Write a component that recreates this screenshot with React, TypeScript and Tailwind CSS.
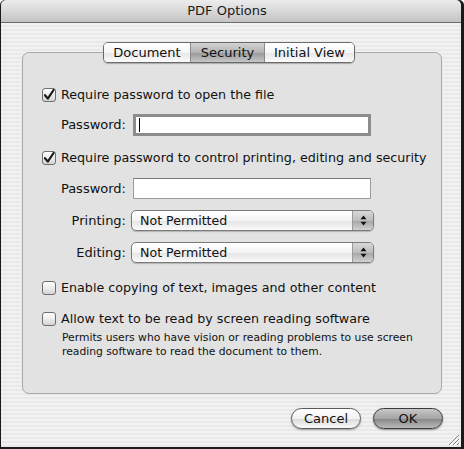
import React from 'react';

const font = "font-['DejaVu_Sans',Verdana,sans-serif]";

const CheckBox = ({ checked }: { checked: boolean }) => (
  <svg width="14" height="14" viewBox="0 0 14 14" className="shrink-0">
    <defs>
      <linearGradient id={checked ? 'cbOn' : 'cbOff'} x1="0" y1="0" x2="0" y2="1">
        <stop offset="0" stopColor="#ffffff" />
        <stop offset="0.5" stopColor="#ececec" />
        <stop offset="1" stopColor="#d2d2d2" />
      </linearGradient>
    </defs>
    <rect x="0.5" y="0.5" width="13" height="13" rx="2.5" fill={`url(#${checked ? 'cbOn' : 'cbOff'})`} stroke="#6e6e6e" />
    {checked && (
      <path d="M3 7.2 L5.8 10.6 L11.6 2" fill="none" stroke="#1a1a1a" strokeWidth="2.2" strokeLinecap="round" strokeLinejoin="round" />
    )}
  </svg>
);

const CheckRow = ({ checked, label }: { checked: boolean; label: string }) => (
  <div className="flex items-center gap-[5px] h-[16px]">
    <CheckBox checked={checked} />
    <span className="text-[12.7px] text-[#111]">{label}</span>
  </div>
);

const Label = ({ children }: { children: React.ReactNode }) => (
  <span className="w-[84px] text-right text-[13px] text-[#111] shrink-0">{children}</span>
);

const PopUp = ({ value }: { value: string }) => (
  <div className="w-[243px] h-[21px] rounded-[5px] border border-[#7a7a7a] flex overflow-hidden bg-[linear-gradient(to_bottom,#ffffff,#f4f4f4_50%,#e6e6e6_55%,#fafafa)] shadow-[0_1px_1px_rgba(0,0,0,0.2)]">
    <span className="flex-1 pl-[8px] text-[12.6px] leading-[19px] text-[#111]">{value}</span>
    <div className="w-[21px] border-l border-[#9a9a9a] flex items-center justify-center bg-[linear-gradient(to_bottom,#d8d8d8,#bdbdbd_50%,#a8a8a8_55%,#d0d0d0)]">
      <svg width="7" height="11" viewBox="0 0 7 11">
        <path d="M3.5 0.5 L6.5 4.2 L0.5 4.2 Z" fill="#111" />
        <path d="M3.5 10.5 L6.5 6.8 L0.5 6.8 Z" fill="#111" />
      </svg>
    </div>
  </div>
);

const tabs = [
  { label: 'Document', w: 'w-[86px]', active: false },
  { label: 'Security', w: 'w-[74px]', active: true },
  { label: 'Initial View', w: 'w-[90px]', active: false },
];

export default function App() {
  return (
    <div className={`${font} w-[464px] h-[449px] flex flex-col bg-[#1a1a1a] pl-px pr-[3px] pb-[2px] rounded-t-[5px] overflow-hidden`}>
      {/* title bar */}
      <div className="h-[23px] shrink-0 rounded-t-[5px] border-b border-[#6a6a6a] bg-[linear-gradient(to_bottom,#ececec,#d6d6d6_55%,#c4c4c4)] flex items-center justify-center">
        <span className="text-[13px] text-[#1a1a1a] -ml-[8px]">PDF Options</span>
      </div>

      {/* content */}
      <div className="flex-1 flex flex-col bg-[repeating-linear-gradient(to_bottom,#f2f2f2_0px,#f2f2f2_2px,#e9e9e9_2px,#e9e9e9_4px)]">
        <div className="pl-[21px] pt-[19px] w-[441px]">
          {/* tabs */}
          <div className="relative z-10 flex ml-[81px] h-[21px] w-fit rounded-[5px] border border-[#6a6a6a] overflow-hidden shadow-[0_1px_1px_rgba(0,0,0,0.25)]">
            {tabs.map((t, i) => (
              <div
                key={t.label}
                className={`${t.w} flex items-center justify-center text-[13px] text-[#111] ${i > 0 ? 'border-l border-[#8a8a8a]' : ''} ${
                  t.active
                    ? 'bg-[linear-gradient(to_bottom,#d2d2d2,#b4b4b4_50%,#9c9c9c_55%,#c6c6c6)]'
                    : 'bg-[linear-gradient(to_bottom,#ffffff,#f6f6f6_50%,#e8e8e8_55%,#fbfbfb)]'
                }`}
              >
                {t.label}
              </div>
            ))}
          </div>

          {/* group box */}
          <div className="-mt-[11px] h-[342px] w-[420px] rounded-[7px] border border-[#a8a8a8] bg-[#e2e2e2] pl-[19px] pt-[34px] flex flex-col">
            <CheckRow checked label="Require password to open the file" />

            <div className="flex items-center gap-[7px] mt-[11px]">
              <Label>Password:</Label>
              <div className="w-[238px] h-[22px] bg-white border-[3px] border-[#8c8c8c] flex items-center pl-[3px]">
                <div className="w-px h-[14px] bg-black" />
              </div>
            </div>

            <div className="mt-[14px]">
              <CheckRow checked label="Require password to control printing, editing and security" />
            </div>

            <div className="flex items-center gap-[7px] mt-[12px]">
              <Label>Password:</Label>
              <div className="w-[238px] h-[21px] bg-white border border-[#9a9a9a] border-t-[#7a7a7a]" />
            </div>

            <div className="flex items-center gap-[5px] mt-[11px]">
              <Label>Printing:</Label>
              <PopUp value="Not Permitted" />
            </div>

            <div className="flex items-center gap-[5px] mt-[11px]">
              <Label>Editing:</Label>
              <PopUp value="Not Permitted" />
            </div>

            <div className="mt-[17px]">
              <CheckRow checked={false} label="Enable copying of text, images and other content" />
            </div>
            <div className="mt-[15px]">
              <CheckRow checked={false} label="Allow text to be read by screen reading software" />
            </div>
            <p className="ml-[20px] mt-[4px] text-[10.75px] leading-[14px] text-[#111]">
              Permits users who have vision or reading problems to use screen
              <br />
              reading software to read the document to them.
            </p>
          </div>
        </div>

        {/* buttons */}
        <div className="flex justify-end gap-[12px] pr-[18px] mt-[14px]">
          <button className="w-[70px] h-[21px] rounded-full border border-[#5a5a5a] text-[13px] text-[#111] bg-[linear-gradient(to_bottom,#ffffff,#f2f2f2_50%,#dcdcdc_55%,#fafafa)] shadow-[0_1px_2px_rgba(0,0,0,0.35)]">
            Cancel
          </button>
          <button className="w-[70px] h-[21px] rounded-full border border-[#3a3a3a] text-[13px] text-[#111] bg-[linear-gradient(to_bottom,#c8c8c8,#a4a4a4_50%,#8a8a8a_55%,#bababa)] shadow-[0_1px_2px_rgba(0,0,0,0.4)]">
            OK
          </button>
        </div>

        {/* resize grip */}
        <div className="flex justify-end mt-auto">
          <svg width="13" height="13" viewBox="0 0 13 13" className="mb-[1px] mr-[1px]">
            <path d="M12 2 L2 12 M12 6 L6 12 M12 10 L10 12" stroke="#7a7a7a" strokeWidth="1" />
            <path d="M12 3 L3 12 M12 7 L7 12" stroke="#ffffff" strokeWidth="1" />
          </svg>
        </div>
      </div>
    </div>
  );
}
